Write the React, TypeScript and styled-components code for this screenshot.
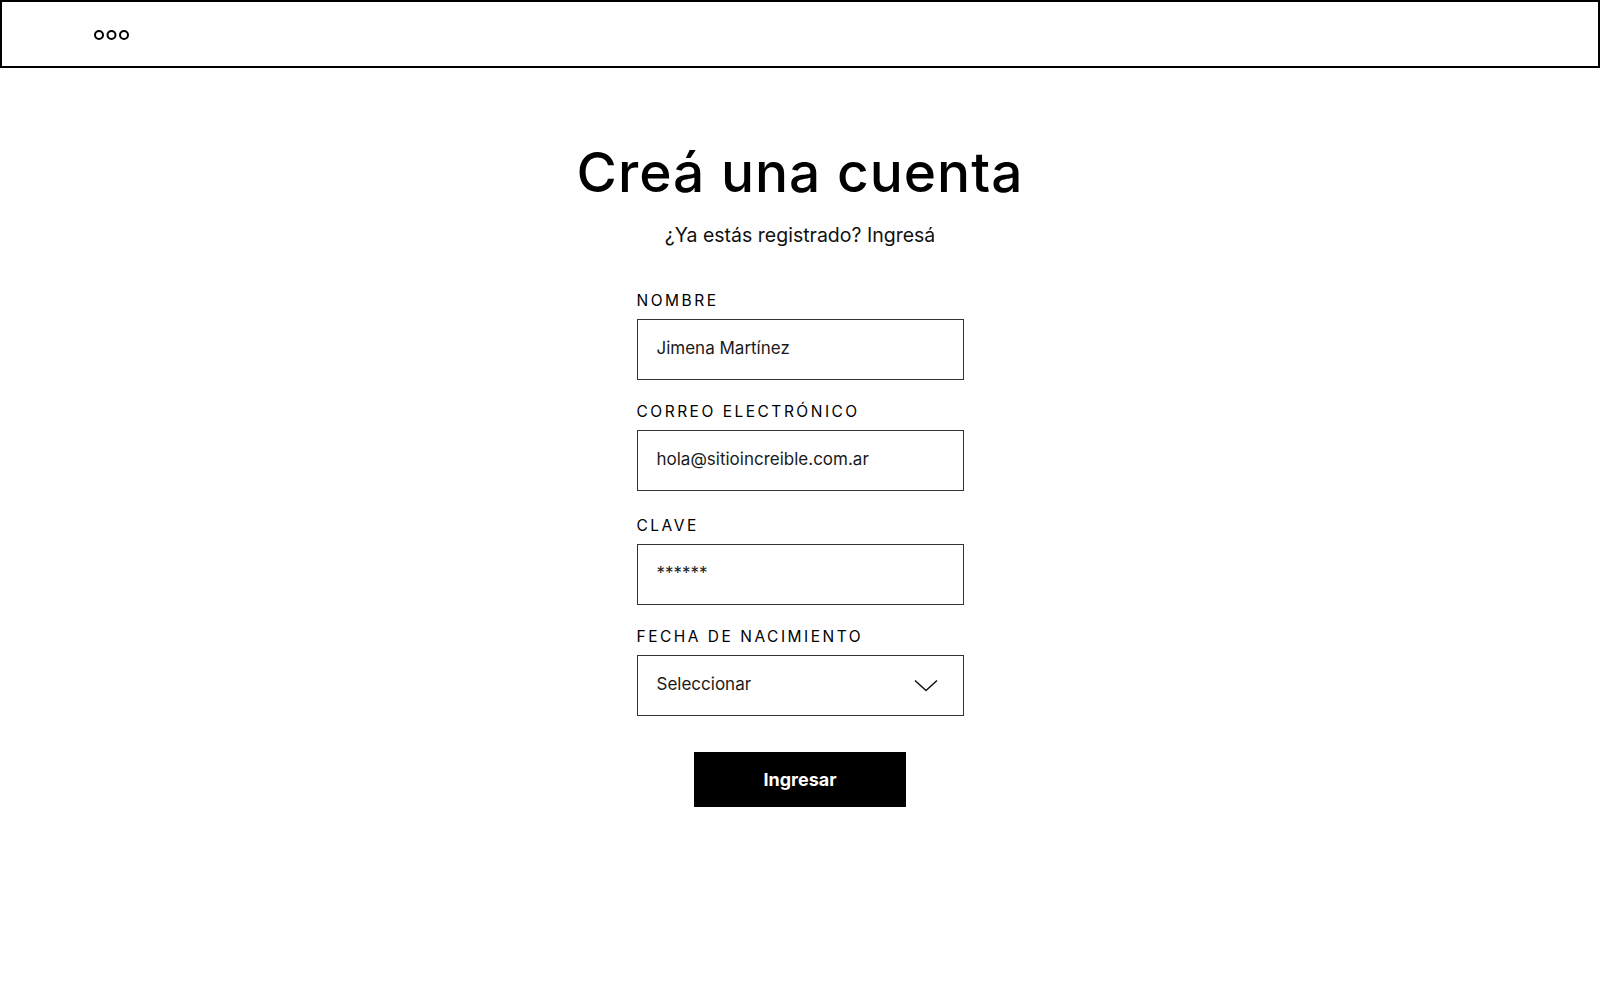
import React from 'react';
import styled, { createGlobalStyle } from 'styled-components';

const GlobalStyle = createGlobalStyle`
  html, body {
    margin: 0;
    padding: 0;
    background: #ffffff;
  }
  body {
    font-family: Inter, "Noto Sans", sans-serif;
    color: #000000;
  }
`;

interface FieldProps {
  label: string;
  value: string;
  select?: boolean;
  extraTop?: number;
}

const fields: FieldProps[] = [
  { label: 'NOMBRE', value: 'Jimena Martínez' },
  { label: 'CORREO ELECTRÓNICO', value: 'hola@sitioincreible.com.ar' },
  { label: 'CLAVE', value: '******', extraTop: 3 },
  { label: 'FECHA DE NACIMIENTO', value: 'Seleccionar', select: true },
];

const Chevron = () => (
  <svg width="24" height="13" viewBox="0 0 24 13" fill="none">
    <path d="M1 1.5L12 11.5L23 1.5" stroke="#111" strokeWidth="1.5" strokeLinejoin="round" />
  </svg>
);

const MenuDots = () => (
  <svg width="37" height="12" viewBox="0 0 37 12" fill="none">
    <circle cx="6" cy="6" r="4" stroke="#000" strokeWidth="2" />
    <circle cx="18.5" cy="6" r="4" stroke="#000" strokeWidth="2" />
    <circle cx="31" cy="6" r="4" stroke="#000" strokeWidth="2" />
  </svg>
);

const Field: React.FC<FieldProps> = ({ label, value, select = false, extraTop = 0 }) => {
  return (
    <FieldGroup $extraTop={extraTop}>
      <Label>{label}</Label>
      <Box>
        <BoxText>{value}</BoxText>
        {select && <Chevron />}
      </Box>
    </FieldGroup>
  );
};

export default function App() {
  return (
    <>
      <GlobalStyle />
      <Page>
        <TopBar>
          <MenuDots />
        </TopBar>
        <Main>
          <Title>Creá una cuenta</Title>
          <Subtitle>¿Ya estás registrado? Ingresá</Subtitle>
          <Form>
            {fields.map((f) => (
              <Field key={f.label} {...f} />
            ))}
          </Form>
          <SubmitButton type="button">Ingresar</SubmitButton>
        </Main>
      </Page>
    </>
  );
}

const Page = styled.div`
  width: 1600px;
  min-height: 1000px;
  display: flex;
  flex-direction: column;
  background: #ffffff;
`;

const TopBar = styled.header`
  height: 68px;
  box-sizing: border-box;
  border: 2px solid #000;
  display: flex;
  align-items: center;
  padding-left: 91px;
  padding-top: 1px;
`;

const Main = styled.main`
  display: flex;
  flex-direction: column;
  align-items: center;
  padding-top: 71px;
`;

const Title = styled.h1`
  margin: 0;
  font-family: Inter, "Noto Sans", sans-serif;
  font-weight: 500;
  font-size: 55px;
  line-height: 66px;
  letter-spacing: 1px;
  color: #000;
`;

const Subtitle = styled.p`
  margin: 18px 0 0;
  font-size: 19.5px;
  line-height: 24px;
  font-weight: 400;
  color: #111;
`;

const Form = styled.div`
  width: 327px;
  margin-top: 44px;
  display: flex;
  flex-direction: column;
  gap: 22px;
`;

const FieldGroup = styled.div<{ $extraTop: number }>`
  display: flex;
  flex-direction: column;
  gap: 8px;
  margin-top: ${({ $extraTop }) => $extraTop}px;
`;

const Label = styled.label`
  font-size: 15.5px;
  line-height: 20px;
  font-weight: 400;
  letter-spacing: 2.5px;
  color: #000;
`;

const Box = styled.div`
  height: 61px;
  box-sizing: border-box;
  border: 1.5px solid #333;
  display: flex;
  align-items: center;
  justify-content: space-between;
  padding: 0 25px 0 19px;
`;

const BoxText = styled.span`
  font-size: 17px;
  color: #1a1a1a;
  padding-bottom: 4px;
`;

const SubmitButton = styled.button`
  margin-top: 36px;
  width: 212px;
  height: 55px;
  border: none;
  background: #000;
  color: #fff;
  font-family: Inter, "Noto Sans", sans-serif;
  font-weight: 700;
  font-size: 18px;
  cursor: pointer;
`;
